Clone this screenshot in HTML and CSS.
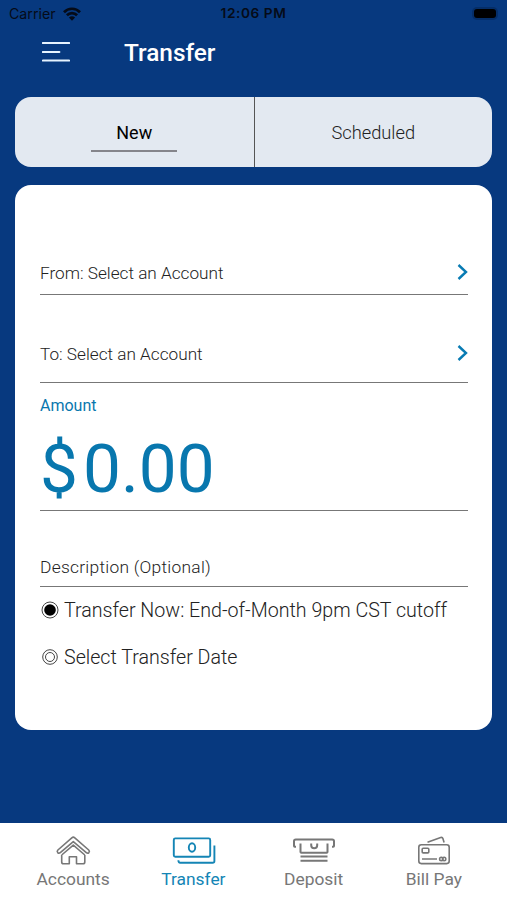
FILE: index.html
```html
<!DOCTYPE html>
<html lang="en">
<head>
<meta charset="utf-8">
<title>Transfer</title>
<link rel="stylesheet" href="styles.css">
</head>
<body>
<div class="app">
  <div class="status">
    <div class="carrier"><span>Carrier</span>
      <svg width="18" height="14" viewBox="0 0 18 14"><path d="M1 5.2C5.4.6 12.6.6 17 5.2M3.9 8.2c2.8-2.9 7.4-2.9 10.2 0" fill="none" stroke="#050b18" stroke-width="2.7"/><path d="M9 13.7 5.9 10.5Q9 8 12.1 10.5Z" fill="#050b18"/></svg>
    </div>
    <span class="clock">12:06 PM</span>
    <span class="battery"></span>
  </div>
  <header class="header">
    <svg width="28" height="20" viewBox="0 0 28 20"><path d="M.8 1h26.4M.8 10h16.6M.8 18.6h26.4" fill="none" stroke="#e6f3ff" stroke-width="2" stroke-linecap="round"/></svg>
    <h1><span>Transfer</span></h1>
  </header>
  <div class="tabs">
    <div class="tab active"><span>New</span></div>
    <div class="tab"><span>Scheduled</span></div>
  </div>
  <main class="card">
    <div class="field from"><span class="label">From: Select an Account</span><svg width="12" height="16" viewBox="0 0 12 16"><path d="m2.5 1 7.5 7-7.5 7" class="chevron"/></svg></div>
    <div class="field to"><span class="label">To: Select an Account</span><svg width="12" height="16" viewBox="0 0 12 16"><path d="m2.5 1 7.5 7-7.5 7" class="chevron"/></svg></div>
    <div class="amount"><span class="caption">Amount</span><div class="money"><span class="currency">$</span><span class="value">0.00</span></div></div>
    <div class="field description"><span class="label">Description (Optional)</span></div>
    <div class="option"><svg width="20" height="20" viewBox="0 0 20 20"><circle cx="10" cy="10" r="8" fill="none" stroke="#444"/><circle cx="10" cy="10" r="5.8"/></svg><span class="now">Transfer Now: End-of-Month 9pm CST cutoff</span></div>
    <div class="option"><svg width="20" height="20" viewBox="0 0 20 20"><g fill="none" stroke="#444"><circle cx="10" cy="10" r="7.3"/><circle cx="10" cy="10" r="4.5"/></g></svg><span class="date">Select Transfer Date</span></div>
  </main>
  <nav class="nav">
    <div class="item"><svg width="46" height="32" viewBox="0 0 46 32"><path d="M7.9 15 21.8 2.8q1.5-1.3 3 0L38.7 15q1.3 1.3.2 2.6-1.2 1.2-2.6 0L23.3 6.6 10.3 17.6q-1.4 1.2-2.6 0-1.1-1.3.2-2.6ZM11.7 20v7q0 1.8 1.8 1.8h5.8v-7h7.2v7H33q1.8 0 1.8-1.8v-7M11.7 20 23.3 10.2 34.8 20"/></svg><span class="accounts">Accounts</span></div>
    <div class="item selected"><svg width="46" height="32" viewBox="0 0 46 32"><rect x="3.8" y="3.4" width="36.4" height="18.4" rx="1.5"/><ellipse cx="22" cy="12.5" rx="3.2" ry="4.2"/><path d="M44.4 10.5V26q0 1.8-1.8 1.8H10.2q-1.8 0-1.8-2.5"/></svg><span class="transfer">Transfer</span></div>
    <div class="item deposit-item"><svg width="46" height="32" viewBox="0 0 46 32"><path d="M5 11.8H3.8Q3 11.8 3 11V6.3q0-1.8 1.8-1.8h36.4Q43 4.5 43 6.3V11q0 .8-.8.8H41M9.5 8.5V17q0 .8.8.8h25.4q.8 0 .8-.8V8.5M20.2 8.5v1.8q0 3 3 3t3-3V8.5M9.5 21.6h27M9.5 25.8h27"/></svg><span class="deposit">Deposit</span></div>
    <div class="item"><svg width="46" height="32" viewBox="0 0 46 32"><rect x="7.8" y="9.8" width="30.4" height="18.8" rx="2.5"/><rect x="11.2" y="13.3" width="6.6" height="4.6" rx="1"/><path d="m16.5 7.3 13.2-4.8q1.7-.5 2.2 1l1.2 4M11 24h15"/><circle cx="30.3" cy="24" r="1.7"/><circle cx="33.1" cy="24" r="1.7"/></svg><span class="billpay">Bill Pay</span></div>
  </nav>
</div>
</body>
</html>
```

FILE: styles.css
```css
* { box-sizing: border-box; }
body { margin: 0; background: #07397f; font-family: Roboto, sans-serif; font-weight: 300; color: #222; }
svg { display: block; flex: none; }
span { white-space: nowrap; }
.app { height: 900px; display: flex; flex-direction: column; }
.status { height: 27px; padding: 0 11px 0 9px; display: grid; grid-template-columns: 1fr auto 1fr; align-items: center; font: 400 14.2px/27px Inter, sans-serif; color: #050b18; }
.carrier { display: flex; align-items: center; gap: 7px; }
.clock { font-weight: 600; font-size: 13.7px; letter-spacing: .55px; padding-left: 2px; }
.battery { width: 22px; height: 9px; background: #000; border-radius: 3px; justify-self: end; box-shadow: 0 0 0 2px #052e68; }
.header { height: 70px; padding: 15px 42px 0; display: flex; align-items: flex-start; }
.header h1 { margin: -3px 0 0 54px; color: #fff; font-size: 24.4px; line-height: 28px; font-weight: 500; }
.tabs { height: 70px; margin: 0 15px; display: grid; grid-template-columns: 1fr 1fr; background: #e3e9f1; border-radius: 16px; flex: none; }
.tab { display: flex; justify-content: center; align-items: flex-start; padding-top: 24px; font-size: 18.3px; line-height: 24px; }
.tab + .tab { border-left: 1px solid #555; }
.active span { width: 86px; text-align: center; color: #000; font-size: 18px; font-weight: 400; border-bottom: 2px solid #85858b; height: 31px; }
.card { margin: 18px 15px 0; height: 545px; background: #fff; border-radius: 16px; padding: 0 24px 0 25px; flex: none; }
.field { display: flex; justify-content: space-between; border-bottom: 1px solid #777; font-size: 17.2px; line-height: 22px; }
.from { height: 110px; padding-top: 77px; }
.to { height: 88px; padding-top: 48px; }
.field svg { margin-top: 2px; }
.chevron { fill: none; stroke: #087bb3; stroke-width: 2.4; }
.amount { height: 128px; border-bottom: 1px solid #777; color: #0877ae; font-weight: 400; padding-top: 12px; }
.caption { display: block; font-size: 16px; line-height: 22px; }
.money { display: flex; margin-top: 12px; font-size: 67.5px; line-height: 80px; }
.currency { width: 43px; }
.description { height: 76px; padding-top: 45px; font-size: 17.4px; letter-spacing: .26px; }
.option { display: flex; align-items: center; gap: 4px; height: 46.5px; font-size: 19.65px; line-height: 26px; }
.option span { padding-top: 2px; }
.nav { margin-top: auto; height: 77px; background: #fff; padding: 12px 13px 0; display: grid; grid-template-columns: repeat(4, 1fr); font-weight: 400; color: #777; }
.item { display: flex; flex-direction: column; align-items: center; font-size: 17.4px; line-height: 24px; }
.item svg { fill: none; stroke: currentColor; stroke-width: 1.6; stroke-linejoin: round; }
.item.deposit-item svg { stroke-width: 2; }
.item.selected svg { stroke-width: 1.9; }
.selected { color: #1485b5; }
```
